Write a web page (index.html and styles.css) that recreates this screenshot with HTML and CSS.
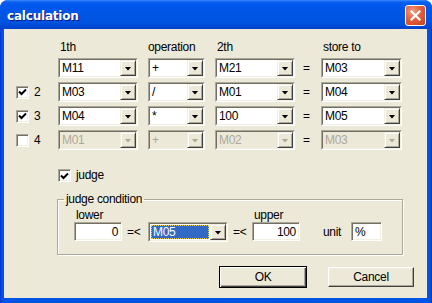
FILE: index.html
```html
<!DOCTYPE html>
<html>
<head>
<meta charset="utf-8">
<link rel="stylesheet" href="styles.css">
</head>
<body>
<div class="window">
  <div class="titlebar">
    <span class="title">calculation</span>
    <span class="close"><svg width="11" height="11" viewBox="0 0 11 11"><path d="M1.5 1.5L9.5 9.5M9.5 1.5L1.5 9.5" stroke="#fff" stroke-width="2.2" stroke-linecap="square"/></svg></span>
  </div>
  <div class="client">
    <div class="calc">
      <span></span><span class="hd">1th</span><span class="hd op">operation</span><span class="hd">2th</span><span></span><span class="hd">store to</span>

      <span></span>
      <div class="combo w80"><div class="field"><span class="val">M11</span><span class="drop"><i></i></span></div></div>
      <div class="combo w57"><div class="field"><span class="val">+</span><span class="drop"><i></i></span></div></div>
      <div class="combo w80"><div class="field"><span class="val">M21</span><span class="drop"><i></i></span></div></div>
      <span class="eq">=</span>
      <div class="combo w81"><div class="field"><span class="val">M03</span><span class="drop"><i></i></span></div></div>

      <label class="rowchk"><span class="chk on"><svg width="9" height="9" viewBox="0 0 9 9"><path d="M1 3.5L3.5 6L8 1.5" stroke="#000" stroke-width="2" fill="none"/></svg></span>2</label>
      <div class="combo w80"><div class="field"><span class="val">M03</span><span class="drop"><i></i></span></div></div>
      <div class="combo w57"><div class="field"><span class="val">/</span><span class="drop"><i></i></span></div></div>
      <div class="combo w80"><div class="field"><span class="val">M01</span><span class="drop"><i></i></span></div></div>
      <span class="eq">=</span>
      <div class="combo w81"><div class="field"><span class="val">M04</span><span class="drop"><i></i></span></div></div>

      <label class="rowchk"><span class="chk on"><svg width="9" height="9" viewBox="0 0 9 9"><path d="M1 3.5L3.5 6L8 1.5" stroke="#000" stroke-width="2" fill="none"/></svg></span>3</label>
      <div class="combo w80"><div class="field"><span class="val">M04</span><span class="drop"><i></i></span></div></div>
      <div class="combo w57"><div class="field"><span class="val">*</span><span class="drop"><i></i></span></div></div>
      <div class="combo w80"><div class="field"><span class="val">100</span><span class="drop"><i></i></span></div></div>
      <span class="eq">=</span>
      <div class="combo w81"><div class="field"><span class="val">M05</span><span class="drop"><i></i></span></div></div>

      <label class="rowchk"><span class="chk"></span>4</label>
      <div class="combo w80 dis"><div class="field"><span class="val">M01</span><span class="drop"><i></i></span></div></div>
      <div class="combo w57 dis"><div class="field"><span class="val">+</span><span class="drop"><i></i></span></div></div>
      <div class="combo w80 dis"><div class="field"><span class="val">M02</span><span class="drop"><i></i></span></div></div>
      <span class="eq">=</span>
      <div class="combo w81 dis"><div class="field"><span class="val">M03</span><span class="drop"><i></i></span></div></div>
    </div>

    <label class="judge"><span class="chk on"><svg width="9" height="9" viewBox="0 0 9 9"><path d="M1 3.5L3.5 6L8 1.5" stroke="#000" stroke-width="2" fill="none"/></svg></span>judge</label>

    <fieldset class="group">
      <legend>judge condition</legend>
      <div class="cond">
        <span class="lbl">lower</span><span></span><span></span><span></span><span class="lbl">upper</span><span></span><span></span>
        <div class="edit num"><span>0</span></div>
        <span class="rel">=&lt;</span>
        <div class="combo w80 focus"><div class="field"><span class="val"><b>M05</b></span><span class="drop"><i></i></span></div></div>
        <span class="rel">=&lt;</span>
        <div class="edit num"><span>100</span></div>
        <span class="unit">unit</span>
        <div class="edit"><span>%</span></div>
      </div>
    </fieldset>

    <div class="buttons">
      <button class="btn default">OK</button>
      <button class="btn">Cancel</button>
    </div>
  </div>
</div>
</body>
</html>
```

FILE: styles.css
```css
html, body {
  margin: 0;
  padding: 0;
  background: #fff;
}

.window {
  width: 432px;
  height: 303px;
  display: flex;
  flex-direction: column;
  background: linear-gradient(to right, #0831d9 0, #0054e3 2px, #0055e5 430px, #0027a0 432px);
  border-radius: 8px 8px 0 0;
  overflow: hidden;
  font-family: "Liberation Sans", Arial, sans-serif;
  font-size: 12px;
  letter-spacing: -0.3px;
  color: #000;
}

.titlebar {
  height: 29px;
  flex: none;
  display: flex;
  align-items: center;
  justify-content: space-between;
  padding: 0 6px 0 7px;
  background: linear-gradient(to bottom, #3a8cff 0, #0a5ff0 2px, #0058ee 5px, #0055e5 14px, #0053e0 22px, #0048d2 27px, #003fc0 29px);
}

.title {
  font-family: "DejaVu Sans", sans-serif;
  font-weight: bold;
  font-size: 12px;
  letter-spacing: -0.2px;
  color: #fff;
  text-shadow: 1px 1px #0a1883;
  padding-top: 2px;
}

.close {
  width: 21px;
  height: 21px;
  box-sizing: border-box;
  border: 1px solid #fff;
  border-radius: 3px;
  background: radial-gradient(circle at 35% 30%, #f0a088 0, #e2613f 45%, #c63d1c 100%);
  display: flex;
  align-items: center;
  justify-content: center;
  margin-top: 2px;
}

.client {
  flex: 1;
  margin: 0 5px 5px 4px;
  background: #ece9d8;
  padding: 11px 13px 0 12px;
  display: flex;
  flex-direction: column;
}

/* main grid */
.calc {
  display: grid;
  grid-template-columns: 32px 80px 57px 80px 6px 81px;
  grid-template-rows: 14px repeat(4, 20px);
  column-gap: 10px;
  row-gap: 4px;
  align-items: center;
}

.hd {
  line-height: 14px;
  padding-left: 2px;
}

.hd.op {
  padding-left: 0;
}

.eq {
  margin-left: -2px;
}

.rowchk {
  display: flex;
  align-items: center;
  gap: 5px;
}

/* checkbox */
.chk {
  width: 13px;
  height: 13px;
  box-sizing: border-box;
  border: 1px solid;
  border-color: #aca899 #fff #fff #aca899;
  background: #fff;
  box-shadow: inset 1px 1px #716f64, inset -1px -1px #f1efe2;
  display: flex;
  align-items: center;
  justify-content: center;
  flex: none;
}

.chk svg {
  margin: 1px 0 0 0;
}

/* combo box */
.combo {
  height: 20px;
  box-sizing: border-box;
  border: 1px solid;
  border-color: #aca899 #fff #fff #aca899;
  background: #fff;
}

.w80 { width: 80px; }
.w57 { width: 57px; }
.w81 { width: 81px; }

.field {
  height: 100%;
  box-sizing: border-box;
  border: 1px solid;
  border-color: #716f64 #f1efe2 #f1efe2 #716f64;
  display: flex;
  align-items: center;
}

.val {
  flex: 1;
  padding-left: 2px;
  line-height: 16px;
  white-space: nowrap;
  overflow: hidden;
}

.drop {
  width: 16px;
  height: 16px;
  flex: none;
  box-sizing: border-box;
  border: 1px solid;
  border-color: #f1efe2 #404040 #404040 #f1efe2;
  box-shadow: inset 1px 1px #fff, inset -1px -1px #aca899;
  background: #ece9d8;
  display: flex;
  align-items: center;
  justify-content: center;
}

.drop i {
  display: block;
  width: 7px;
  height: 4px;
  background: #000;
  clip-path: polygon(0 0, 100% 0, 50% 100%);
  margin-top: 1px;
}

.combo.dis {
  background: #ece9d8;
}

.combo.dis .val {
  color: #aca899;
}

.combo.dis .drop i {
  background: #aca899;
}

.combo.focus .val {
  padding: 1px;
  line-height: 14px;
}

.combo.focus .val b {
  display: block;
  font-weight: normal;
  background: #316ac5;
  color: #fff;
  padding-left: 2px;
  outline: 1px dotted #e8d060;
  outline-offset: -1px;
}

/* judge checkbox */
.judge {
  display: flex;
  align-items: center;
  gap: 5px;
  margin: 19px 0 0 42px;
  line-height: 13px;
}

/* group box */
.group {
  margin: 10px 0 0 41px;
  padding: 0 0 12px 16px;
  width: 346px;
  box-sizing: border-box;
  border: 1px solid #aca899;
  box-shadow: inset 1px 1px #fff, 1px 1px #fff;
  min-inline-size: 0;
}

.group legend {
  padding: 0 2px;
  margin-left: -10px;
  line-height: 14px;
}

.cond {
  display: grid;
  grid-template-columns: 48px 26px 80px 24px 48px 51px 31px;
  grid-template-rows: 13px 20px;
  align-items: center;
  padding-top: 3px;
}

.lbl {
  line-height: 13px;
  padding-left: 2px;
  align-self: start;
}

.edit {
  height: 19px;
  box-sizing: border-box;
  border: 1px solid;
  border-color: #aca899 #fff #fff #aca899;
  background: #fff;
  box-shadow: inset 1px 1px #716f64, inset -1px -1px #f1efe2;
  display: flex;
  align-items: center;
  padding: 0 3px;
  align-self: start;
}

.edit.num {
  justify-content: flex-end;
}

.rel {
  padding-left: 5px;
}

.unit {
  padding-left: 23px;
}

/* buttons */
.buttons {
  display: flex;
  justify-content: flex-end;
  align-items: center;
  gap: 21px;
  margin-top: 11px;
}

.btn {
  width: 86px;
  height: 20px;
  box-sizing: border-box;
  margin: 0;
  padding: 0;
  font-family: "Liberation Sans", Arial, sans-serif;
  font-size: 12px;
  letter-spacing: -0.3px;
  color: #000;
  background: #ece9d8;
  border: 1px solid;
  border-color: #fff #404040 #404040 #fff;
  box-shadow: inset -1px -1px #aca899, inset 1px 1px #f1efe2;
}

.btn.default {
  width: 88px;
  height: 22px;
  border: 1px solid #000;
  box-shadow: inset 1px 1px #fff, inset -1px -1px #404040, inset -2px -2px #aca899;
}
```
